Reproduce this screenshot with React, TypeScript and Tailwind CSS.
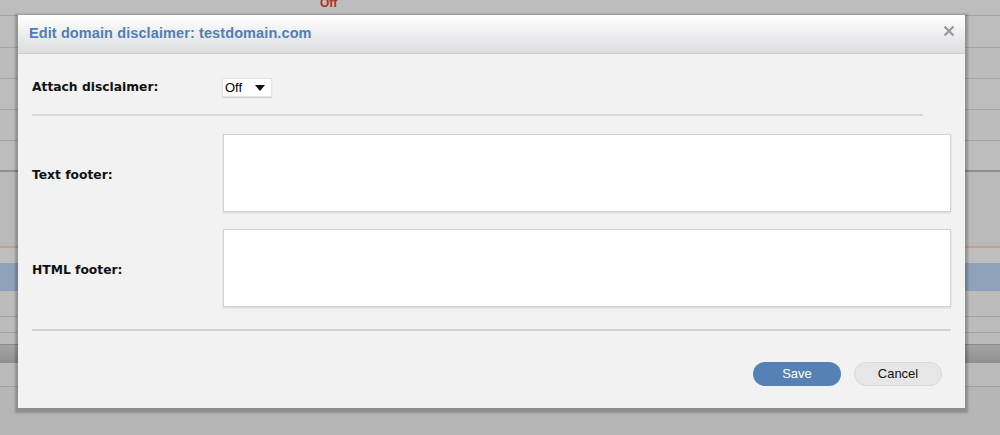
import React from "react";

function BgRow({ h, cls = "" }: { h: string; cls?: string }) {
  return <div className={`${h} w-full border-b border-[#a2a2a2] ${cls}`} />;
}

export default function App() {
  return (
    <div className="relative w-[1000px] h-[435px] overflow-hidden bg-[#b6b6b6] font-['Liberation_Sans',Arial,sans-serif]">
      {/* background page (dimmed) */}
      <div className="flex flex-col w-full">
        <div className="h-[16px] w-full border-b border-[#a2a2a2] bg-[#bdbdbd] relative">
          <span className="absolute left-[320px] top-[-6px] text-[12px] font-bold text-[#b0301d]">Off</span>
        </div>
        <BgRow h="h-[32px]" cls="bg-[#bdbdbd]" />
        <BgRow h="h-[31px]" cls="bg-[#bcbcbc]" />
        <BgRow h="h-[31px]" cls="bg-[#bdbdbd]" />
        <BgRow h="h-[31px]" cls="bg-[#bcbcbc]" />
        <div className="h-[31px] w-full border-b-2 border-[#8e8e8e] bg-[#bdbdbd]" />
        <div className="h-[76px] w-full border-b-2 border-[#c4a088] bg-[#b9b9b9]" />
        <div className="h-[15px] w-full bg-[#bebebe]" />
        <div className="h-[28px] w-full bg-[#8fa2ba]" />
        <BgRow h="h-[26px]" cls="bg-[#bcbcbc]" />
        <BgRow h="h-[16px]" cls="bg-[#bcbcbc]" />
        <div className="h-[12px] w-full bg-[#bbbbbb] border-b border-[#8a8a8a]" />
        <div className="h-[18px] w-full bg-gradient-to-b from-[#a4a4a4] to-[#8f8f8f]" />
        <BgRow h="h-[24px]" cls="bg-[#bababa]" />
      </div>

      {/* modal */}
      <div className="absolute left-[18px] top-[15px] w-[947px] h-[393px] bg-[#f2f2f2] shadow-[0_2px_2px_3px_rgba(0,0,0,0.22)] flex flex-col">
        <div className="h-[39px] flex items-center justify-between bg-gradient-to-b from-[#ffffff] to-[#dcdde0] border-b border-[#cdcdcd] pl-[11px] pr-[10px]">
          <span className="text-[14.5px] font-bold text-[#4f7fb5] tracking-[0.1px]">Edit domain disclaimer: testdomain.com</span>
          <svg width="12" height="12" viewBox="0 0 12 12" className="mt-[-6px]">
            <path d="M1.5 1.5 L10.5 10.5 M10.5 1.5 L1.5 10.5" stroke="#9a9a9a" strokeWidth="2.4" strokeLinecap="butt" />
          </svg>
        </div>

        <div className="flex flex-col pl-[14px] pr-[14px] pt-[24px] font-['DejaVu_Sans',Verdana,sans-serif]">
          <div className="flex items-center h-[19px]">
            <div className="w-[190px] text-[12.3px] font-bold text-[#111]">Attach disclaimer:</div>
            <div className="w-[50px] h-[19px] bg-white border border-[#e2e2e2] shadow-[0_1px_1px_rgba(0,0,0,0.12)] flex items-center justify-between pl-[2px] pr-[6px] font-['Liberation_Sans',Arial,sans-serif] text-[13px] text-black">
              <span>Off</span>
              <svg width="10" height="6" viewBox="0 0 10 6">
                <path d="M0 0 L10 0 L5 6 Z" fill="#111" />
              </svg>
            </div>
          </div>

          <div className="mt-[17px] w-[891px] h-[2px] bg-[#d8d8d8]" />

          <div className="mt-[18px] flex items-center">
            <div className="w-[191px] pt-[5px] text-[12.3px] font-bold text-[#111]">Text footer:</div>
            <div className="w-[728px] h-[78px] bg-white border border-[#d2d2d2] shadow-[0_1px_2px_rgba(0,0,0,0.12)]" />
          </div>

          <div className="mt-[17px] flex items-center">
            <div className="w-[191px] pt-[5px] text-[12.3px] font-bold text-[#111]">HTML footer:</div>
            <div className="w-[728px] h-[78px] bg-white border border-[#d2d2d2] shadow-[0_1px_2px_rgba(0,0,0,0.12)]" />
          </div>

          <div className="mt-[22px] w-[919px] h-[2px] bg-[#d2d2d2]" />

          <div className="mt-[31px] flex justify-end gap-[13px] pr-[9px] font-['Liberation_Sans',Arial,sans-serif]">
            <button className="w-[88px] h-[24px] rounded-full bg-[#5581b4] text-white text-[13px] flex items-center justify-center">Save</button>
            <button className="w-[88px] h-[24px] rounded-full bg-[#e6e6e6] border border-[#d8d8d8] text-[#111] text-[13px] flex items-center justify-center">Cancel</button>
          </div>
        </div>
      </div>
    </div>
  );
}
